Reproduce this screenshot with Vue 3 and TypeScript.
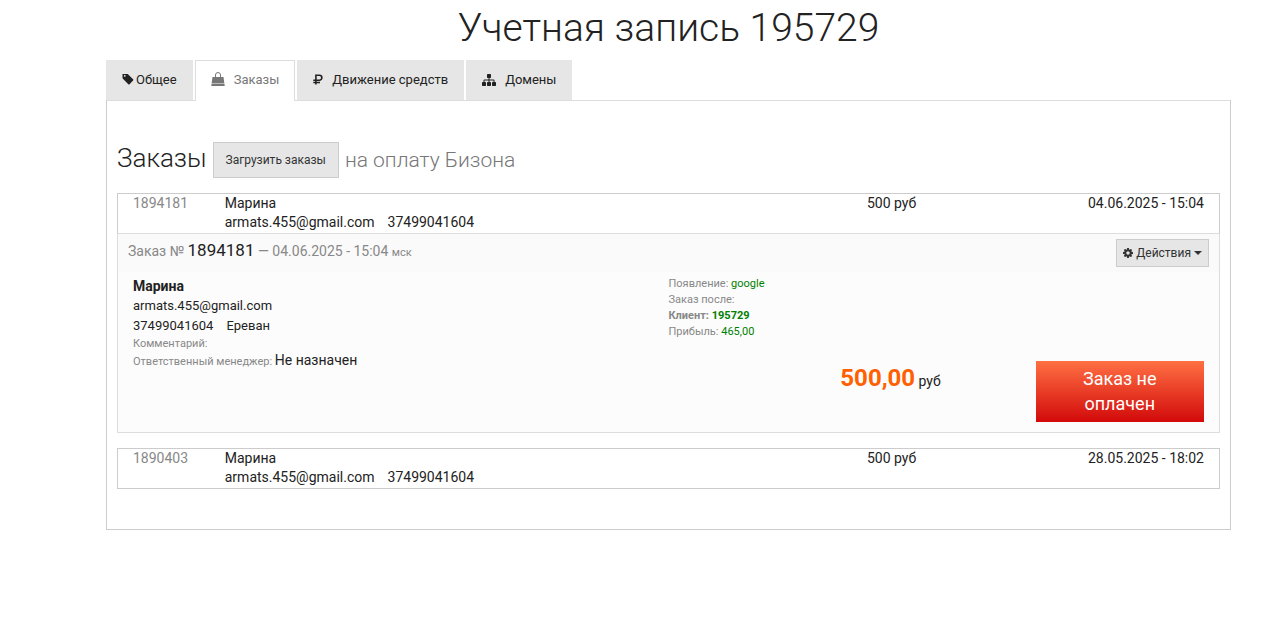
<script setup lang="ts">
import { ref } from 'vue'

interface Tab {
  id: string
  label: string
}

interface Order {
  id: string
  name: string
  email: string
  phone: string
  sum: string
  date: string
}

const tabs: Tab[] = [
  { id: 'general', label: 'Общее' },
  { id: 'orders', label: 'Заказы' },
  { id: 'money', label: 'Движение средств' },
  { id: 'domains', label: 'Домены' },
]

const orders: Order[] = [
  { id: '1894181', name: 'Марина', email: 'armats.455@gmail.com', phone: '37499041604', sum: '500 руб', date: '04.06.2025 - 15:04' },
  { id: '1890403', name: 'Марина', email: 'armats.455@gmail.com', phone: '37499041604', sum: '500 руб', date: '28.05.2025 - 18:02' },
]

const activeTab = ref('orders')
const openOrder = ref('1894181')
</script>

<template>
  <main class="page">
    <h1 class="title">Учетная запись 195729</h1>

    <nav class="tabs">
      <a
        v-for="tab in tabs"
        :key="tab.id"
        href="#"
        :class="['tab', `tab-${tab.id}`, { active: tab.id === activeTab }]"
        @click.prevent="activeTab = tab.id"
      >
        <svg v-if="tab.id === 'general'" class="icon icon-tag" viewBox="64 192 1664 1536" aria-hidden="true">
          <path d="M576 448q0-53-37.500-90.500t-90.500-37.500-90.500 37.500-37.500 90.500 37.500 90.500 90.500 37.500 90.500-37.500 37.500-90.500zm1067 576q0 53-37 90l-491 492q-39 37-91 37-53 0-90-37l-715-716q-38-37-64.500-101t-26.500-117v-416q0-52 38-90t90-38h416q53 0 117 26.500t102 64.500l715 714q37 39 37 91z" />
        </svg>
        <svg v-else-if="tab.id === 'orders'" class="icon icon-bag" viewBox="0 0 14 14" aria-hidden="true">
          <path d="M4.500 5.500V3a2.500 2.500 0 0 1 5 0V5.500" fill="none" stroke="currentColor" stroke-width="1" />
          <path d="M1.500 5H12.500L13.300 11H.7ZM.6 11.600H13.400L13.700 14H.3Z" />
        </svg>
        <svg v-else-if="tab.id === 'money'" class="icon icon-ruble" viewBox="0 0 10 11" aria-hidden="true">
          <path d="M2.900 10.500V1.300H6.400a2.400 2.400 0 0 1 0 4.900H.3M.3 8.500H7" fill="none" stroke="currentColor" stroke-width="1.600" />
        </svg>
        <svg v-else class="icon icon-sitemap" viewBox="0 128 1792 1536" aria-hidden="true">
          <path d="M1792 1248v320q0 40-28 68t-68 28h-320q-40 0-68-28t-28-68v-320q0-40 28-68t68-28h96v-192h-512v192h96q40 0 68 28t28 68v320q0 40-28 68t-68 28h-320q-40 0-68-28t-28-68v-320q0-40 28-68t68-28h96v-192h-512v192h96q40 0 68 28t28 68v320q0 40-28 68t-68 28h-320q-40 0-68-28t-28-68v-320q0-40 28-68t68-28h96v-192q0-52 38-90t90-38h512v-192h-96q-40 0-68-28t-28-68v-320q0-40 28-68t68-28h320q40 0 68 28t28 68v320q0 40-28 68t-68 28h-96v192h512q52 0 90 38t38 90v192h96q40 0 68 28t28 68z" />
        </svg>
        <span>{{ tab.label }}</span>
      </a>
    </nav>

    <section class="panel">
      <header class="heading">
        <h2>Заказы</h2>
        <button type="button" class="btn load">Загрузить заказы</button>
        <span class="hint">на оплату Бизона</span>
      </header>

      <article v-for="order in orders" :key="order.id" class="order">
        <div class="grid summary">
          <span class="number">{{ order.id }}</span>
          <div class="contact">
            <div>{{ order.name }}</div>
            <div class="pair"><span>{{ order.email }}</span><span>{{ order.phone }}</span></div>
          </div>
          <span class="sum">{{ order.sum }}</span>
          <span class="date">{{ order.date }}</span>
        </div>

        <div v-if="order.id === openOrder" class="details">
          <div class="details-head">
            <p class="caption">
              Заказ № <span class="big">{{ order.id }}</span> — {{ order.date }} <small>мск</small>
            </p>
            <button type="button" class="btn actions">
              <svg class="icon icon-cog" viewBox="128 128 1536 1536" aria-hidden="true">
                <path d="M1152 896q0-106-75-181t-181-75-181 75-75 181 75 181 181 75 181-75 75-181zm512-109v222q0 12-8 23t-20 13l-185 28q-19 54-39 91 35 50 107 138 10 12 10 25t-9 23q-27 37-99 108t-94 71q-12 0-26-9l-138-108q-44 23-91 38-16 136-29 186-7 28-36 28h-222q-14 0-24.500-8.500t-11.500-21.500l-28-184q-49-16-90-37l-141 107q-10 9-25 9-14 0-25-11-126-114-165-168-7-10-7-23 0-12 8-23 15-21 51-66.500t54-70.500q-27-50-41-99l-183-27q-13-2-21-12.500t-8-23.500v-222q0-12 8-23t19-13l186-28q14-46 39-92-40-57-107-138-10-12-10-24 0-10 9-23 26-36 98.500-107.500t94.500-71.500q13 0 26 10l138 107q44-23 91-38 16-136 29-186 7-28 36-28h222q14 0 24.500 8.500t11.500 21.500l28 184q49 16 90 37l142-107q9-9 24-9 13 0 25 10 129 119 165 170 7 8 7 22 0 12-8 23-15 21-51 66.500t-54 70.500q26 50 41 98l183 28q13 2 21 12.500t8 23.500z" />
              </svg>
              <span>Действия</span>
              <span class="caret"></span>
            </button>
          </div>

          <div class="grid details-body">
            <div class="client">
              <div class="client-name">{{ order.name }}</div>
              <div class="client-line">{{ order.email }}</div>
              <div class="client-line pair"><span>{{ order.phone }}</span><span>Ереван</span></div>
              <div class="note">Комментарий:</div>
              <div class="note">Ответственный менеджер: <span class="manager">Не назначен</span></div>
            </div>
            <div class="meta">
              <div>Появление: <span class="green">google</span></div>
              <div>Заказ после:</div>
              <div class="strong">Клиент: <span class="green">195729</span></div>
              <div>Прибыль: <span class="green">465,00</span></div>
            </div>
            <div class="price"><strong>500,00</strong> руб</div>
            <button type="button" class="status">Заказ не оплачен</button>
          </div>
        </div>
      </article>
    </section>
  </main>
</template>

<style>
body {
  background: #fff;
}
</style>

<style scoped>
.page {
  box-sizing: border-box;
  padding: 0 51px 0 106px;
  color: #222;
  font-family: Roboto, "Liberation Sans", sans-serif;
  font-size: 14px;
  line-height: 19px;
}

.title {
  margin: 0;
  padding: 4px 0 8px;
  font-size: 39px;
  font-weight: 300;
  line-height: 48px;
  text-align: center;
}

.icon {
  display: block;
  flex: none;
  fill: currentColor;
}

.tabs {
  display: flex;
  gap: 2px;
}

.tab {
  display: flex;
  align-items: center;
  gap: 9px;
  box-sizing: border-box;
  height: 40px;
  padding: 0 15px 2px;
  border: 1px solid #e6e6e6;
  border-bottom: 0;
  background: #e6e6e6;
  color: #222;
  font-size: 13px;
  text-decoration: none;
}

.tab.active {
  height: 41px;
  margin-bottom: -1px;
  padding-bottom: 4px;
  border-color: #ddd;
  background: #fff;
  color: #777;
}

.tab-general {
  gap: 2px;
}

.icon-tag {
  width: 12px;
  height: 11px;
}

.icon-bag {
  width: 14px;
  height: 14px;
}

.icon-ruble {
  width: 10px;
  height: 11px;
}

.icon-sitemap {
  width: 14px;
  height: 12px;
}

.panel {
  padding: 41px 10px 40px;
  border: 1px solid #ccc;
  border-top-color: #ddd;
}

.heading {
  display: flex;
  align-items: center;
  gap: 6px;
  margin-bottom: 15px;
}

.heading h2 {
  margin: 0;
  padding-bottom: 4px;
  font-size: 26px;
  font-weight: 300;
  line-height: 32px;
}

.hint {
  color: #777;
  font-size: 21px;
  font-weight: 300;
  line-height: 36px;
}

.btn {
  box-sizing: border-box;
  border: 1px solid #ccc;
  background: #e6e6e6;
  color: #333;
  font-family: inherit;
  font-size: 12px;
}

.load {
  height: 36px;
  padding: 0 12px;
}

.grid {
  display: grid;
  grid-template-columns: repeat(12, minmax(0, 1fr));
}

.order + .order {
  margin-top: 15px;
}

.summary {
  border: 1px solid #ccc;
  padding-bottom: 1px;
}

.summary:not(:last-child) {
  border-bottom-color: #ddd;
}

.number {
  padding-left: 15px;
  color: #888;
}

.contact {
  grid-column: 2 / 9;
  padding-left: 15px;
}

.pair {
  display: flex;
  gap: 13px;
}

.sum {
  grid-column: 9 / 11;
  padding-left: 15px;
}

.date {
  grid-column: 11 / 13;
  padding-right: 15px;
  text-align: right;
}

.details {
  border: 1px solid #ddd;
  border-top: 0;
  background: #fcfcfc;
}

.details-head {
  display: flex;
  align-items: flex-start;
  justify-content: space-between;
  padding: 5px 10px;
  background: #fafafa;
}

.caption {
  margin: 0;
  color: #888;
  line-height: 22px;
}

.big {
  color: #222;
  font-size: 17px;
}

.caption small {
  font-size: 11px;
}

.actions {
  display: flex;
  align-items: center;
  gap: 3px;
  height: 28px;
  padding: 0 6px;
}

.icon-cog {
  width: 10px;
  height: 10px;
}

.caret {
  border: 4px solid transparent;
  border-top-color: #333;
  border-bottom: 0;
}

.details-body {
  grid-template-rows: auto 1fr;
  padding: 4px 0 10px;
}

.client {
  grid-column: 1 / 7;
  grid-row: 1 / 3;
  padding-left: 15px;
}

.client-name {
  font-weight: 700;
  line-height: 20px;
}

.client-line {
  font-size: 13px;
  line-height: 20px;
}

.note {
  color: #888;
  font-size: 11px;
  line-height: 16px;
}

.manager {
  color: #222;
  font-size: 14px;
}

.meta {
  grid-column: 7 / 13;
  padding-bottom: 21px;
  color: #888;
  font-size: 11px;
  line-height: 16px;
}

.strong {
  font-weight: 700;
}

.green {
  color: #008000;
}

.price {
  grid-column: 7 / 10;
  grid-row: 2;
  padding-right: 3px;
  line-height: 34px;
  text-align: right;
}

.price strong {
  color: #ff6000;
  font-size: 24px;
}

.status {
  grid-column: 11 / 13;
  grid-row: 2;
  margin: 0 15px 0 0;
  padding: 5px 40px 6px;
  border: 0;
  background: linear-gradient(#ff7043, #d20a0a);
  color: #fff;
  font-family: inherit;
  font-size: 18px;
  line-height: 25px;
}
</style>
